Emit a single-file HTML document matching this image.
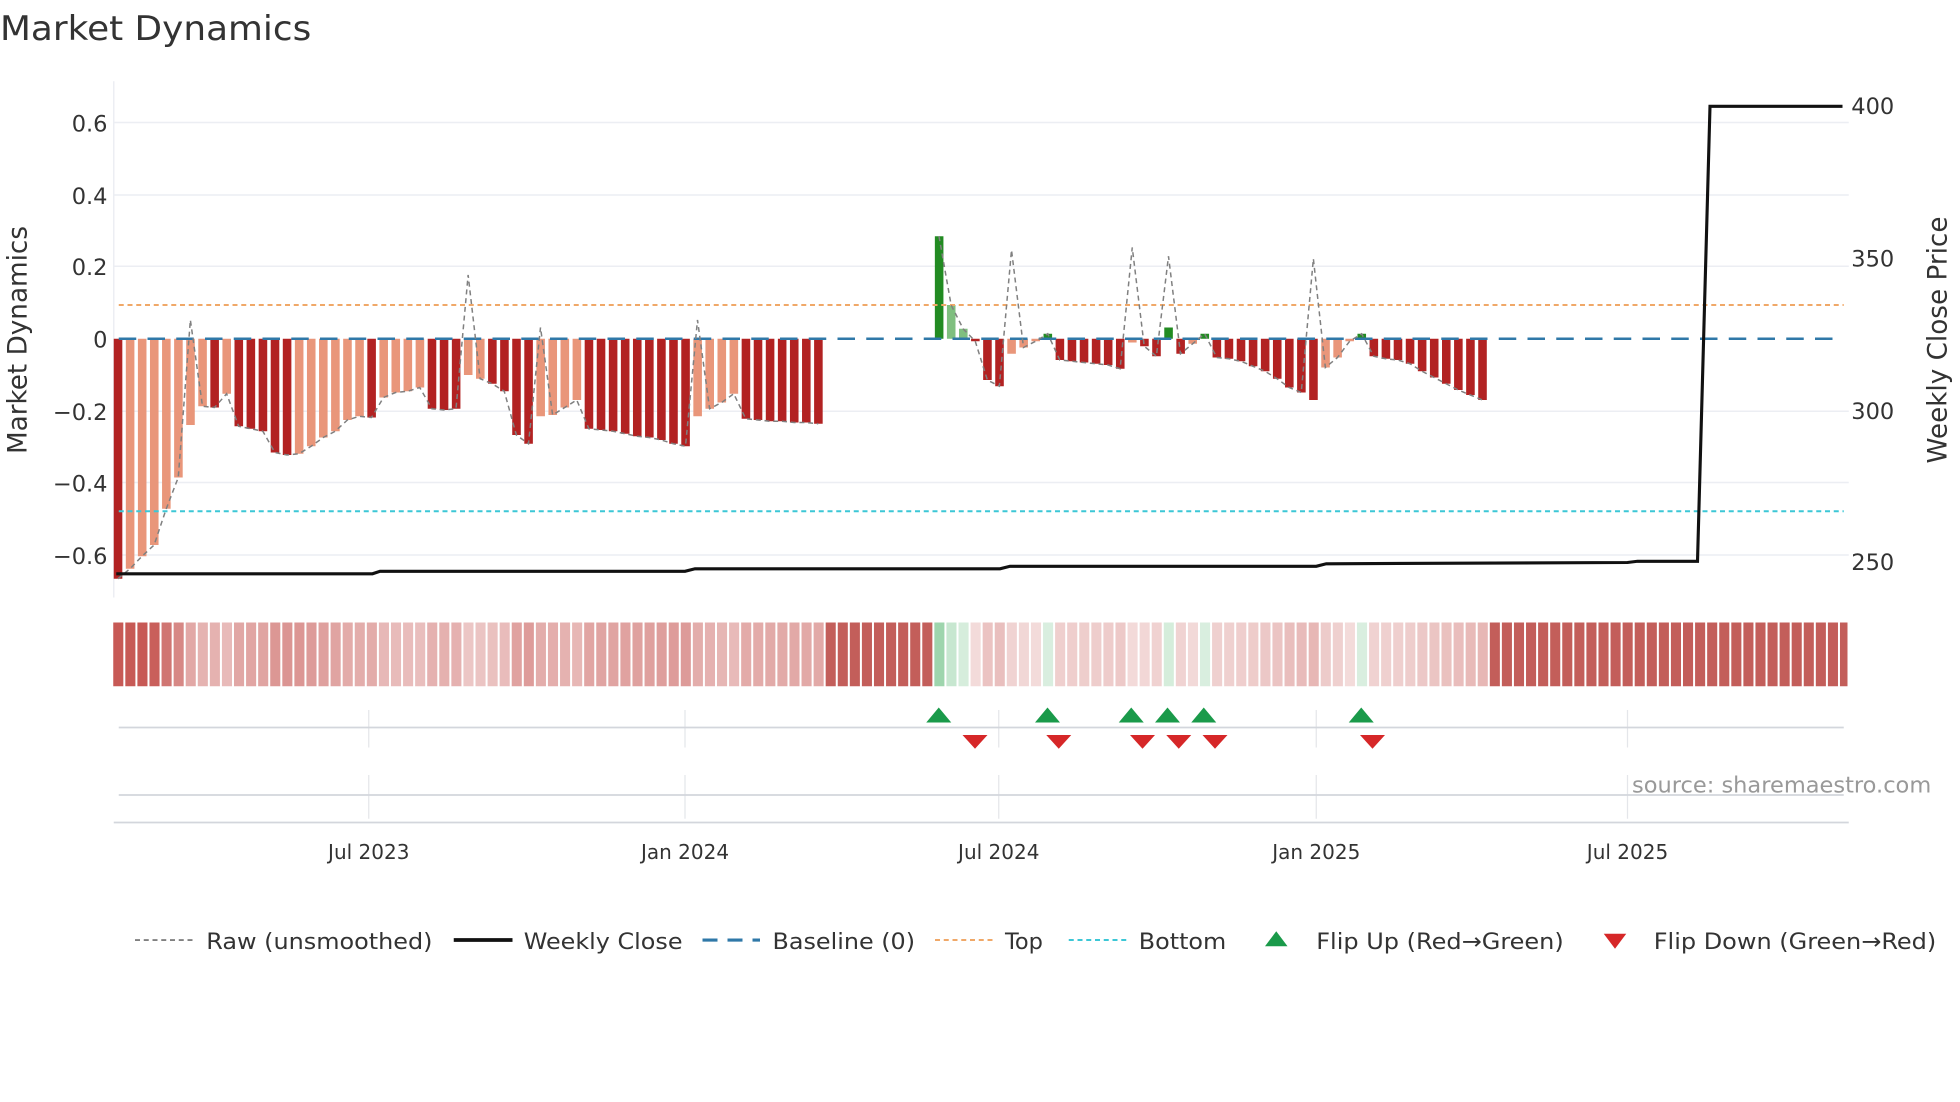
<!DOCTYPE html>
<html><head><meta charset="utf-8"><style>
html,body{margin:0;padding:0;background:#fff;}
svg{display:block;}
text{font-family:"DejaVu Sans","Liberation Sans",sans-serif;fill:#333;}
</style></head><body>
<svg id="s" width="1960" height="1102" viewBox="0 0 1568 881.6" xmlns="http://www.w3.org/2000/svg">
<rect width="1568" height="882" fill="#fff"/>
<text x="0" y="32" font-size="27" textLength="249" lengthAdjust="spacingAndGlyphs">Market Dynamics</text>
<line x1="91" y1="65" x2="91" y2="478" stroke="#eceef3" stroke-width="1.2"/>
<g stroke="#eceef3" stroke-width="1.2">
<line x1="91" y1="98" x2="1479" y2="98"/><line x1="91" y1="156" x2="1479" y2="156"/>
<line x1="91" y1="213" x2="1479" y2="213"/><line x1="91" y1="329" x2="1479" y2="329"/>
<line x1="91" y1="386" x2="1479" y2="386"/><line x1="91" y1="444" x2="1479" y2="444"/>
</g>
<g font-size="18" text-anchor="end">
<text x="86" y="105">0.6</text><text x="86" y="163">0.4</text><text x="86" y="220">0.2</text>
<text x="86" y="278">0</text><text x="86" y="336">−0.2</text><text x="86" y="393">−0.4</text><text x="86" y="451">−0.6</text>
</g>
<g font-size="18">
<text x="1481" y="91">400</text><text x="1481" y="213">350</text><text x="1481" y="335">300</text><text x="1481" y="456">250</text>
</g>
<text transform="translate(21,272) rotate(-90)" font-size="21" text-anchor="middle">Market Dynamics</text>
<text transform="translate(1557,272) rotate(-90)" font-size="21" text-anchor="middle">Weekly Close Price</text>
<g id="bars"></g>
<line x1="95" y1="244" x2="1475" y2="244" stroke="#f0a868" stroke-width="1.6" stroke-dasharray="4,3"/>
<line x1="95" y1="409" x2="1475" y2="409" stroke="#3cc7d6" stroke-width="1.6" stroke-dasharray="4,3"/>
<line x1="95" y1="271" x2="1475" y2="271" stroke="#2f78a8" stroke-width="2" stroke-dasharray="14,9"/>
<g id="rawg"></g>
<polyline fill="none" stroke="#111" stroke-width="2.5" points="93,459 298,459 304,457 548,457 556,455 800,455 808,453 1053,453 1061,451 1302,450 1310,449 1358,449 1368,85 1474,85"/>
<g id="heat"></g>
<g stroke="#e4e6ea" stroke-width="1">
<line x1="295" y1="568" x2="295" y2="598"/><line x1="548" y1="568" x2="548" y2="598"/><line x1="799" y1="568" x2="799" y2="598"/><line x1="1053" y1="568" x2="1053" y2="598"/><line x1="1302" y1="568" x2="1302" y2="598"/>
<line x1="295" y1="620" x2="295" y2="655"/><line x1="548" y1="620" x2="548" y2="655"/><line x1="799" y1="620" x2="799" y2="655"/><line x1="1053" y1="620" x2="1053" y2="655"/><line x1="1302" y1="620" x2="1302" y2="655"/>
</g>
<line x1="95" y1="582" x2="1475" y2="582" stroke="#d3d6dc" stroke-width="1.4"/>
<line x1="95" y1="636" x2="1475" y2="636" stroke="#d3d6dc" stroke-width="1.4"/>
<line x1="91" y1="658" x2="1479" y2="658" stroke="#d3d6dc" stroke-width="1.4"/>
<g id="flips"></g>
<text x="1545" y="634" font-size="18" text-anchor="end" style="fill:#999">source: sharemaestro.com</text>
<g font-size="16" text-anchor="middle">
<text x="295" y="687">Jul 2023</text><text x="548" y="687">Jan 2024</text><text x="799" y="687">Jul 2024</text><text x="1053" y="687">Jan 2025</text><text x="1302" y="687">Jul 2025</text>
</g>
<line x1="108" y1="752" x2="154" y2="752" stroke="#808080" stroke-width="1.5" stroke-dasharray="4,3"/>
<text x="165" y="759" font-size="18" textLength="181" lengthAdjust="spacingAndGlyphs">Raw (unsmoothed)</text>
<line x1="363" y1="752" x2="410" y2="752" stroke="#111" stroke-width="3"/>
<text x="419" y="759" font-size="18" textLength="127" lengthAdjust="spacingAndGlyphs">Weekly Close</text>
<line x1="562" y1="752" x2="608" y2="752" stroke="#2f78a8" stroke-width="2.5" stroke-dasharray="12,8"/>
<text x="618" y="759" font-size="18" textLength="114" lengthAdjust="spacingAndGlyphs">Baseline (0)</text>
<line x1="748" y1="752" x2="794" y2="752" stroke="#f0a868" stroke-width="1.6" stroke-dasharray="4,3"/>
<text x="804" y="759" font-size="18">Top</text>
<line x1="855" y1="752" x2="901" y2="752" stroke="#3cc7d6" stroke-width="1.6" stroke-dasharray="4,3"/>
<text x="911" y="759" font-size="18" textLength="70" lengthAdjust="spacingAndGlyphs">Bottom</text>
<polygon points="1012,757 1021,745 1030,757" fill="#1a9a4a"/>
<text x="1053" y="759" font-size="18" textLength="198" lengthAdjust="spacingAndGlyphs">Flip Up (Red→Green)</text>
<polygon points="1283,747 1301,747 1292,759" fill="#d62728"/>
<text x="1323" y="759" font-size="18" textLength="226" lengthAdjust="spacingAndGlyphs">Flip Down (Green→Red)</text>
</svg>
<script>
(function(){
var NS="http://www.w3.org/2000/svg";
function el(t,a,p){var e=document.createElementNS(NS,t);for(var k in a)e.setAttribute(k,a[k]);p.appendChild(e);return e;}
var seg1=[[463,'D'],[455,'S'],[445,'S'],[436,'S'],[407,'S'],[382,'S'],[340,'S'],[325,'S'],[326,'D'],[315,'S'],[341,'D'],[343,'D'],[345,'D'],[362,'D'],[364,'D'],[363,'S'],[357,'S'],[350,'S'],[345,'S'],[336,'S'],[333,'S'],[334,'D'],[318,'S'],[314,'S'],[313,'S'],[310,'S'],[327,'D'],[328,'D'],[327,'D'],[300,'S'],[303,'S'],[307,'D'],[313,'D'],[348,'D'],[355,'D'],[333,'S'],[332,'S'],[326,'S'],[320,'S'],[343,'D'],[344,'D'],[345,'D'],[347,'D'],[349,'D'],[350,'D'],[352,'D'],[355,'D'],[357,'D'],[333,'S'],[327,'S'],[322,'S'],[315,'S'],[335,'D'],[336,'D'],[337,'D'],[337,'D'],[338,'D'],[338,'D'],[339,'D']];
var seg2=[[189,'G'],[244,'L'],[263,'L'],[273,'D'],[304,'D'],[309,'D'],[283,'S'],[278,'S'],[273,'S'],[267,'G'],[288,'D'],[289,'D'],[290,'D'],[291,'D'],[292,'D'],[295,'D'],[274,'S'],[277,'D'],[285,'D'],[262,'G'],[283,'D'],[275,'S'],[267,'G'],[286,'D'],[287,'D'],[289,'D'],[293,'D'],[297,'D'],[303,'D'],[310,'D'],[314,'D'],[320,'D'],[294,'S'],[286,'S'],[273,'S'],[267,'G'],[285,'D'],[287,'D'],[288,'D'],[291,'D'],[297,'D'],[302,'D'],[307,'D'],[312,'D'],[316,'D'],[320,'D']];
var step=9.66, x0=91, N=144;
var vals=[];for(var i=0;i<N;i++)vals.push(null);
var s2start=68;
seg1.forEach(function(b,i){vals[i]=b;});
seg2.forEach(function(b,i){vals[s2start+i]=b;});
var col={D:'#b22222',S:'#e9967a',G:'#228b22',L:'#7fbf7f'};
var bars=document.getElementById('bars'),heat=document.getElementById('heat'),rawg=document.getElementById('rawg');
var rawPts=[];
var spikes={6:256,29:220,35:262,48:256};
var spikes2={6:200,16:198,19:205,31:207};
for(var i=0;i<N;i++){
 var bx=x0+i*step-1.5, b=vals[i];
 var hc;
 if(b){
  var by=b[0], ty=Math.min(by,271), bh=Math.abs(by-271);
  el('rect',{x:bx+1.5,y:ty,width:step-2.8,height:Math.max(bh,1.5),fill:col[b[1]]},bars);
  var v=(271-by)/288.3, a=0.2+0.75*Math.min(1,Math.abs(v)/0.6);
  if(b[1]=='G'||b[1]=='L') hc='rgba(60,170,90,'+(a*0.9)+')'; else hc='rgba(196,80,76,'+a+')';
  var ry=by;
  if(i<seg1.length && spikes[i])ry=spikes[i];
  var j=i-s2start; if(j>=0&&spikes2[j])ry=spikes2[j];
  rawPts.push((bx+step/2).toFixed(1)+','+ry);
 } else hc='rgba(190,80,76,0.92)';
 var hx=x0+i*step+0.6, hw=Math.min(step-1.6,1479-hx);
 if(hw>0) el('rect',{x:hx-1,y:498,width:hw,height:51,fill:hc},heat);
 if(!b && rawPts.length){rawPts.push('|');}
}
rawPts.join(' ').split('|').forEach(function(s){s=s.trim();if(s){el('polyline',{points:s,fill:'none',stroke:'#808080','stroke-width':1.2,'stroke-dasharray':'4,3'},rawg);}});
var fl=document.getElementById('flips');
[751,838,905,934,963,1089].forEach(function(x){el('polygon',{points:(x-10)+',578 '+x+',566 '+(x+10)+',578',fill:'#1a9a4a'},fl);});
[780,847,914,943,972,1098].forEach(function(x){el('polygon',{points:(x-10)+',588 '+(x+10)+',588 '+x+',599',fill:'#d62728'},fl);});
})();
</script>
</body></html>
